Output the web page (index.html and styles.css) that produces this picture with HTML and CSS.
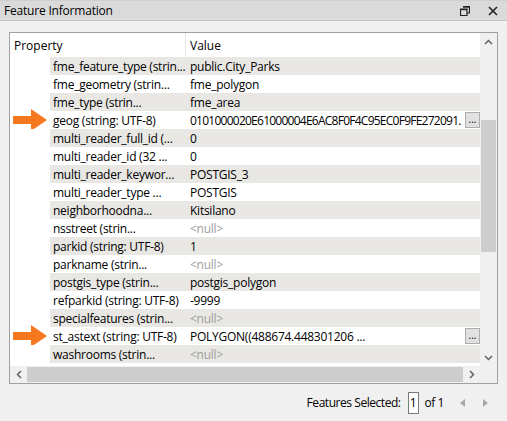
FILE: index.html
```html
<!DOCTYPE html>
<html>
<head>
<meta charset="utf-8">
<link rel="stylesheet" href="styles.css">
</head>
<body>
<div class="titlebar">
  <span class="title">Feature Information</span>
  <span class="ticons">
    <svg width="10" height="10" viewBox="0 0 10 10"><path d="M3 0.5h6.5v6.5h-2.5M0.5 3h6.5v6.5h-6.5z" fill="none" stroke="#222" stroke-width="1.2"/><path d="M0.5 3.6h6.5" stroke="#222" stroke-width="1.2"/><path d="M3 1.1h6.5" stroke="#222" stroke-width="1.2"/></svg>
    <svg width="10" height="10" viewBox="0 0 10 10"><path d="M1 1L9 9M9 1L1 9" stroke="#222" stroke-width="1.6"/></svg>
  </span>
</div>
<div class="panel">
  <div class="table">
    <div class="header">
      <div class="hprop">Property</div>
      <div class="hval">Value</div>
    </div>
    <div class="row alt"><div class="ind"></div><div class="prop">fme_feature_type (strin...</div><div class="val">public.City_Parks</div></div>
    <div class="row"><div class="ind"></div><div class="prop">fme_geometry (strin...</div><div class="val">fme_polygon</div></div>
    <div class="row alt"><div class="ind"></div><div class="prop">fme_type (strin...</div><div class="val">fme_area</div></div>
    <div class="row"><div class="ind"><svg class="arrow" width="36" height="22" viewBox="0 0 36 22"><path d="M0 7H18V0L34 11L18 22V15H0Z" fill="#f37820"/></svg></div><div class="prop">geog (string: UTF-8)</div><div class="val"><span class="vt tight">0101000020E61000004E6AC8F0F4C95EC0F9FE272091.</span><span class="dots">...</span></div></div>
    <div class="row alt"><div class="ind"></div><div class="prop">multi_reader_full_id (...</div><div class="val">0</div></div>
    <div class="row"><div class="ind"></div><div class="prop">multi_reader_id (32 ...</div><div class="val">0</div></div>
    <div class="row alt"><div class="ind"></div><div class="prop">multi_reader_keywor...</div><div class="val">POSTGIS_3</div></div>
    <div class="row"><div class="ind"></div><div class="prop">multi_reader_type ...</div><div class="val">POSTGIS</div></div>
    <div class="row alt"><div class="ind"></div><div class="prop">neighborhoodna...</div><div class="val">Kitsilano</div></div>
    <div class="row"><div class="ind"></div><div class="prop">nsstreet (strin...</div><div class="val null">&lt;null&gt;</div></div>
    <div class="row alt"><div class="ind"></div><div class="prop">parkid (string: UTF-8)</div><div class="val">1</div></div>
    <div class="row"><div class="ind"></div><div class="prop">parkname (strin...</div><div class="val null">&lt;null&gt;</div></div>
    <div class="row alt"><div class="ind"></div><div class="prop">postgis_type (strin...</div><div class="val">postgis_polygon</div></div>
    <div class="row"><div class="ind"></div><div class="prop">refparkid (string: UTF-8)</div><div class="val">-9999</div></div>
    <div class="row alt"><div class="ind"></div><div class="prop">specialfeatures (strin...</div><div class="val null">&lt;null&gt;</div></div>
    <div class="row"><div class="ind"><svg class="arrow" width="36" height="22" viewBox="0 0 36 22"><path d="M0 7H18V0L34 11L18 22V15H0Z" fill="#f37820"/></svg></div><div class="prop">st_astext (string: UTF-8)</div><div class="val"><span class="vt">POLYGON((488674.448301206 ...</span><span class="dots">...</span></div></div>
    <div class="row alt"><div class="ind"></div><div class="prop">washrooms (strin...</div><div class="val null">&lt;null&gt;</div></div>
  </div>
  <div class="vscroll">
    <div class="sbtn"><svg width="9" height="6" viewBox="0 0 9 6"><path d="M1 5L4.5 1.5L8 5" fill="none" stroke="#606060" stroke-width="1.5"/></svg></div>
    <div class="vtrack"><div class="vthumb"></div></div>
    <div class="sbtn"><svg width="9" height="6" viewBox="0 0 9 6"><path d="M1 1L4.5 4.5L8 1" fill="none" stroke="#606060" stroke-width="1.5"/></svg></div>
  </div>
  <div class="hscroll">
    <div class="sbtn"><svg width="6" height="9" viewBox="0 0 6 9"><path d="M5 1L1.5 4.5L5 8" fill="none" stroke="#606060" stroke-width="1.5"/></svg></div>
    <div class="htrack"><div class="hthumb"></div></div>
    <div class="sbtn"><svg width="6" height="9" viewBox="0 0 6 9"><path d="M1 1L4.5 4.5L1 8" fill="none" stroke="#606060" stroke-width="1.5"/></svg></div>
  </div>
  <div class="corner"></div>
</div>
<div class="footer">
  <span>Features Selected:</span>
  <span class="pagebox">1</span>
  <span>of 1</span>
  <span class="nav">
    <svg width="5" height="8" viewBox="0 0 5 8"><path d="M5 0V8L0 4Z" fill="#a8a8a8"/></svg>
    <svg width="5" height="8" viewBox="0 0 5 8"><path d="M0 0V8L5 4Z" fill="#a8a8a8"/></svg>
  </span>
</div>
</body>
</html>
```
FILE: styles.css
```css
* { box-sizing: border-box; }
html, body { margin: 0; padding: 0; }
body {
  width: 507px;
  height: 421px;
  background: #f0f0f0;
  font-family: "Open Sans", "Noto Sans", sans-serif;
  font-size: 12px;
  color: #000;
  overflow: hidden;
}
.titlebar {
  height: 21px;
  background: #dadada;
  border-top: 1px solid #cfcfcf;
  border-bottom: 1px solid #c4c4c4;
  display: flex;
  align-items: center;
  justify-content: space-between;
  padding: 0 9px 0 4px;
}
.title { font-size: 12px; letter-spacing: -0.2px; }
.ticons { display: flex; gap: 18px; align-items: center; }
.panel {
  margin: 11px 9px 0 9px;
  height: 352px;
  border: 1px solid #a0a0a0;
  background: #fff;
  display: grid;
  grid-template-columns: 470px 17px;
  grid-template-rows: 333px 17px;
}
.table { overflow: hidden; background: #fff; }
.header {
  height: 24px;
  display: grid;
  grid-template-columns: 176px 1fr;
  align-items: stretch;
}
.hprop { padding-left: 4px; line-height: 25px; border-right: 1px solid #e5e5e5; }
.hval { padding-left: 4px; line-height: 25px; }
.row {
  height: 18px;
  display: grid;
  grid-template-columns: 40px 136px 294px;
  line-height: 19px;
  letter-spacing: -0.25px;
}
.row.alt .prop, .row.alt .val { background: #e9e7e4; }
.ind { position: relative; background: #fff; }
.arrow { position: absolute; left: 3px; top: -2px; }
.prop { padding-left: 3px; white-space: nowrap; overflow: hidden; }
.val { padding-left: 4px; white-space: nowrap; overflow: hidden; display: flex; }
.val.null { color: #a0a0a0; }
.vt { flex: 1; overflow: hidden; }
.vt.tight { letter-spacing: -0.75px; }
.dots {
  width: 15px;
  height: 16px;
  margin-top: 1px;
  background: #e1e1e1;
  border: 1px solid #adadad;
  font-size: 10px;
  line-height: 12px;
  text-align: center;
  letter-spacing: 0;
  flex: none;
}
.vscroll {
  background: #f0f0f0;
  display: flex;
  flex-direction: column;
}
.sbtn {
  width: 17px;
  height: 17px;
  display: flex;
  align-items: center;
  justify-content: center;
  flex: none;
}
.vtrack { flex: 1; padding: 70px 1px 0 1px; }
.vthumb { height: 132px; background: #cdcdcd; }
.hscroll {
  background: #f0f0f0;
  display: flex;
}
.htrack { flex: 1; padding: 1px 0; }
.hthumb { height: 15px; background: #cdcdcd; }
.corner { background: #f0f0f0; }
.footer {
  height: 37px;
  display: flex;
  align-items: center;
  justify-content: flex-end;
  padding: 0 19px 0 0;
  gap: 6px;
  font-size: 12px;
  letter-spacing: -0.45px;
}
.pagebox {
  width: 11px;
  height: 22px;
  border: 1px solid #7a7a7a;
  background: #fff;
  text-align: center;
  line-height: 20px;
  margin-left: 1px;
  letter-spacing: 0;
}
.nav { display: flex; gap: 18px; margin-left: 10px; }
```
